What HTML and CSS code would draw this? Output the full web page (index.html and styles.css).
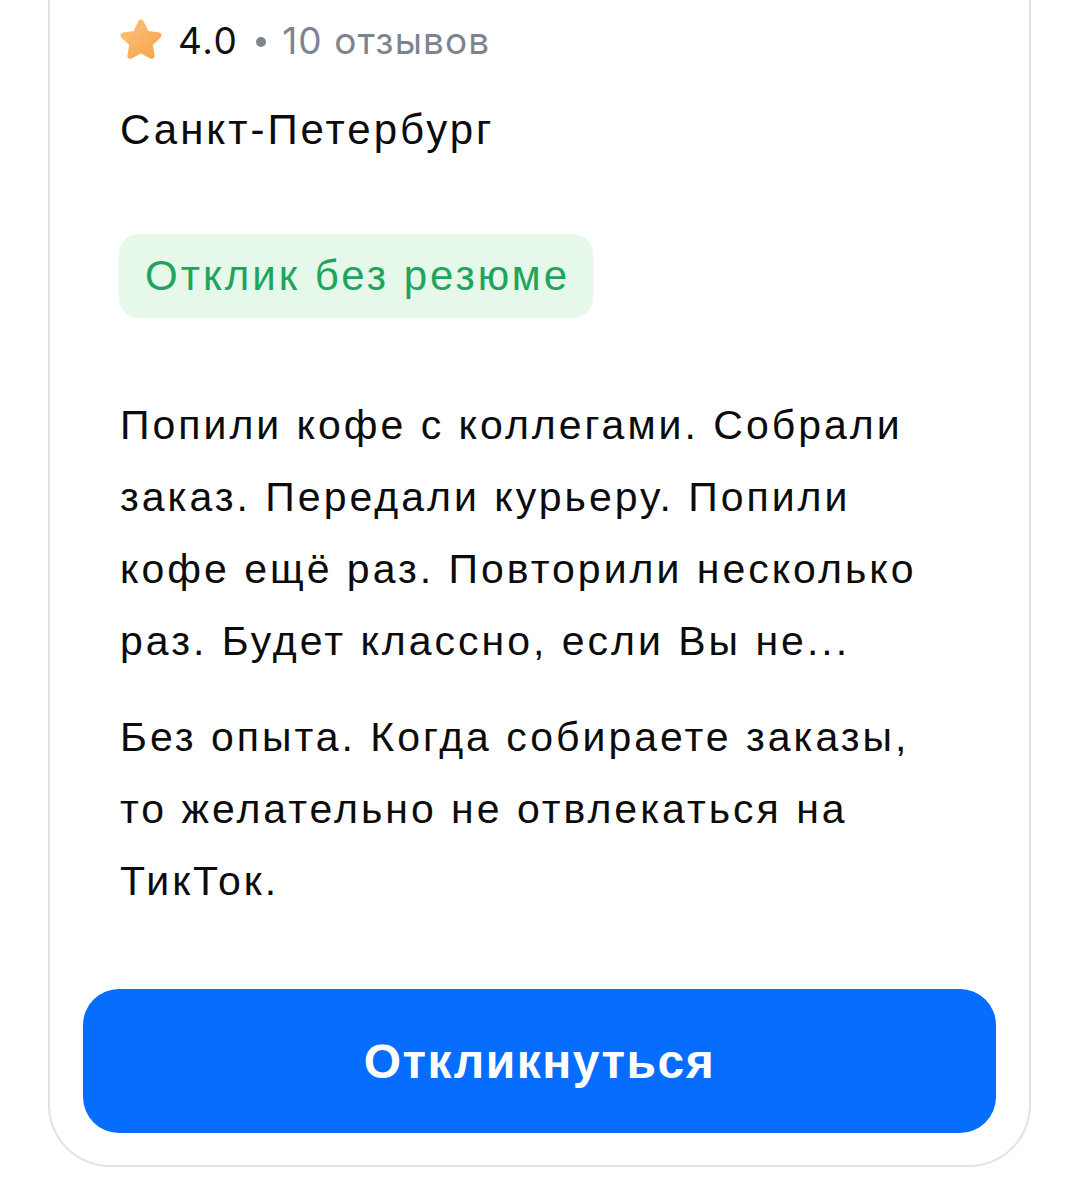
FILE: index.html
```html
<!DOCTYPE html>
<html lang="ru">
<head>
    <meta charset="UTF-8">
    <meta name="viewport" content="width=device-width, initial-scale=1.0">
    <title>Вакансия</title>
    <link rel="stylesheet" href="styles.css">
</head>
<body>
    <div class="card">
        <div class="info">
            <div class="rating">
                <svg class="star" width="48" height="46" viewBox="0 0 24 23">
                    <defs>
                        <linearGradient id="starGrad" x1="0" y1="0" x2="1" y2="1">
                            <stop offset="0" stop-color="#fcc37a"/>
                            <stop offset="1" stop-color="#f7a24a"/>
                        </linearGradient>
                    </defs>
                    <path d="M12 1.2c.6 0 1 .3 1.3.9l2.4 4.9 5.3.8c1.2.2 1.6 1.6.8 2.4l-3.9 3.8.9 5.3c.2 1.2-1 2.1-2.1 1.5L12 18.3l-4.7 2.5c-1.1.6-2.3-.3-2.1-1.5l.9-5.3-3.9-3.8c-.8-.8-.4-2.2.8-2.4l5.3-.8 2.4-4.9c.3-.6.7-.9 1.3-.9z" fill="url(#starGrad)"/>
                </svg>
                <span class="score">4.0</span>
                <span class="dot"></span>
                <span class="reviews">10 отзывов</span>
            </div>

            <div class="city">Санкт-Петербург</div>

            <div class="tag">Отклик без резюме</div>

            <p class="text">Попили кофе с коллегами. Собрали заказ. Передали курьеру. Попили кофе ещё раз. Повторили несколько раз. Будет классно, если Вы не...</p>
            <p class="text">Без опыта. Когда собираете заказы, то желательно не отвлекаться на ТикТок.</p>
        </div>

        <button class="apply" type="button">Откликнуться</button>
    </div>
</body>
</html>
```

FILE: styles.css
```css
body {
    margin: 0;
    padding: 0;
    background: #fff;
    font-family: "Liberation Sans", Arial, sans-serif;
    color: #0c0c0d;
    letter-spacing: 3px;
}
.card {
    margin: 0 49px 0 48px;
    border: 2px solid #e1e2e6;
    border-top: none;
    border-radius: 0 0 62px 62px;
    padding: 0 33px 32px;
}
.info {
    padding: 14px 37px 0 37px;
}
.rating {
    display: flex;
    align-items: center;
    height: 52px;
    font-family: Inter, "Liberation Sans", sans-serif;
    font-size: 37px;
    letter-spacing: 1.5px;
}
.star {
    margin-left: -3px;
    margin-right: 13px;
}
.score {
    color: #111;
}
.dot {
    width: 10px;
    height: 10px;
    border-radius: 50%;
    background: #7d858f;
    margin: 4px 16px 0 18px;
}
.reviews {
    color: #7d848e;
    letter-spacing: 1.1px;
}
.city {
    margin-top: 36px;
    font-size: 42px;
    line-height: 56px;
}
.tag {
    display: inline-block;
    margin-top: 76px;
    height: 84px;
    line-height: 84px;
    padding: 0 23px 0 26px;
    margin-left: -1px;
    border-radius: 20px;
    background: #e6f8ea;
    color: #1ea55c;
    font-size: 42px;
}
.text {
    margin: 0;
    font-size: 41px;
    line-height: 72px;
}
.info .tag + .text {
    margin-top: 71px;
}
.text + .text {
    margin-top: 24px;
}
.apply {
    display: block;
    width: 100%;
    height: 144px;
    margin-top: 72px;
    border: none;
    border-radius: 36px;
    background: #066dfe;
    color: #fff;
    font-family: "Liberation Sans", Arial, sans-serif;
    font-size: 48px;
    font-weight: bold;
    letter-spacing: 1.5px;
    cursor: pointer;
}
```
